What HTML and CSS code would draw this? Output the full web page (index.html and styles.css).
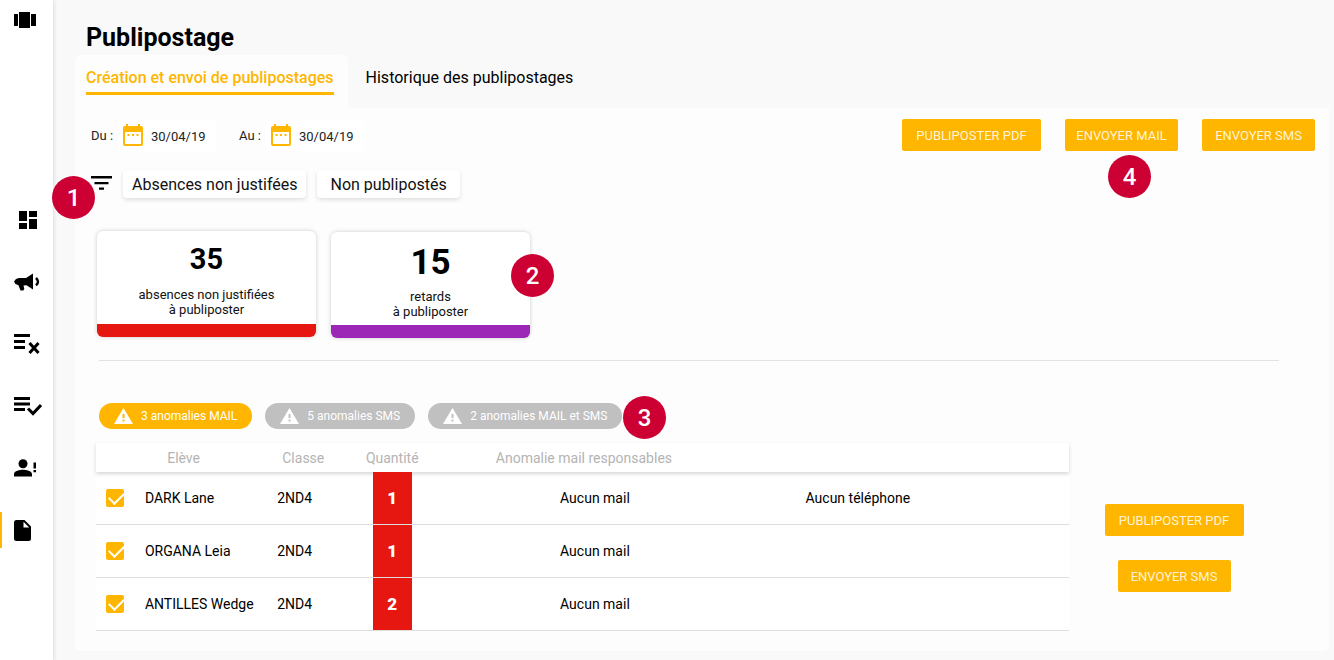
FILE: index.html
```html
<!DOCTYPE html>
<html lang="fr">
<head>
<meta charset="utf-8">
<meta name="viewport" content="width=device-width, initial-scale=1">
<title>Publipostage</title>
<link rel="stylesheet" href="styles.css">
</head>
<body>
<div class="app">
  <nav class="sidebar" aria-label="Navigation principale">
    <a class="side-link side-home" href="#" aria-label="Accueil"><svg width="22" height="18" viewBox="0 0 22 18"><path d="M0 3h4v12H0zM5 1h11v16H5zM17 3h5v12h-5z"/></svg></a>
    <a class="side-link" href="#" aria-label="Tableau de bord"><svg class="icon-dash" width="18" height="18" viewBox="0 0 18 18"><path d="M0 0h8v10H0zM10 0h8v6h-8zM0 12h8v6H0zM10 8h8v10h-8z"/></svg></a>
    <a class="side-link" href="#" aria-label="Annonces"><svg width="26" height="18" viewBox="0 0 26 18"><path d="M19 .5v16l-6.500-4.200-3 .2.800 3.500-1 1.500H6.500L4.500 12.300 1.500 11 0 8.500 2 6l3-1h7z"/><path d="M22 5q4 3.700 0 7.400" fill="none" stroke="#000" stroke-width="2.400"/></svg></a>
    <a class="side-link" href="#" aria-label="Absences"><svg width="27" height="22" viewBox="0 0 27 22"><path d="M0 1h16v3H0zM0 7h11v3H0zM0 13h11v3H0z"/><path d="M15.500 10l9 10M24.500 10l-9 10" fill="none" stroke="#000" stroke-width="3"/></svg></a>
    <a class="side-link" href="#" aria-label="Appels"><svg width="28" height="20" viewBox="0 0 28 20"><path d="M0 1h16v3H0zM0 6.500h16v3H0zM0 12h11v3H0z"/><path d="M14 12.500l5 5 8-8.500" fill="none" stroke="#000" stroke-width="3"/></svg></a>
    <a class="side-link" href="#" aria-label="Incidents"><svg width="24" height="18" viewBox="0 0 24 18"><circle cx="9" cy="4.700" r="4.500"/><path d="M0 17.500v-2.500c0-3 6-4.300 9-4.300s9 1.300 9 4.300v2.500zM19.500 3.500H22v6h-2.500zM19.500 11H22v2.200h-2.500z"/></svg></a>
    <a class="side-link side-current" href="#" aria-label="Publipostage" aria-current="page"><svg width="17" height="21" viewBox="0 0 17 21"><path fill-rule="evenodd" d="M2.500 0h8L17 6.500V18.500q0 2.500-2.500 2.500h-12Q0 21 0 18.500v-16Q0 0 2.500 0zM9.500 1.800v5.700h5.700z"/></svg></a>
  </nav>

  <main class="main">
    <h1 class="title">Publipostage</h1>
    <div class="tabs">
      <a class="tab tab-active" href="#creation" aria-current="page"><span class="tab-text">Création et envoi de publipostages</span></a>
      <a class="tab" href="#historique">Historique des publipostages</a>
    </div>

    <section class="panel" id="creation">
      <div class="toolbar">
        <div class="dates">
          <label class="date-label" for="from">Du :</label>
          <div class="date-box">
            <svg class="calendar" width="20" height="22" viewBox="0 0 20 22"><path fill-rule="evenodd" d="M3 0h2v2h10V0h2v2h1q2 0 2 2v16q0 2-2 2H2q-2 0-2-2V4q0-2 2-2h1zM2 8v12h16V8z"/><path d="M4.500 10h2v2h-2zM9 10h2v2H9zM13.500 10h2v2h-2z"/></svg>
            <input class="date-input" id="from" type="text" value="30/04/19">
          </div>
          <label class="date-label date-label-to" for="to">Au :</label>
          <div class="date-box">
            <svg class="calendar" width="20" height="22" viewBox="0 0 20 22"><path fill-rule="evenodd" d="M3 0h2v2h10V0h2v2h1q2 0 2 2v16q0 2-2 2H2q-2 0-2-2V4q0-2 2-2h1zM2 8v12h16V8z"/><path d="M4.500 10h2v2h-2zM9 10h2v2H9zM13.500 10h2v2h-2z"/></svg>
            <input class="date-input" id="to" type="text" value="30/04/19">
          </div>
        </div>
        <div class="actions">
          <button class="btn btn-wide" type="button">PUBLIPOSTER PDF</button>
          <div class="anchor">
            <button class="btn" type="button">ENVOYER MAIL</button>
            <span class="badge badge-mail">4</span>
          </div>
          <button class="btn" type="button">ENVOYER SMS</button>
        </div>
      </div>

      <div class="filters">
        <span class="badge badge-filter">1</span>
        <svg class="filter-icon" width="21" height="14" viewBox="0 0 21 14"><path d="M0 0h21v2.500H0zM3.500 6h14v2.300h-14zM8 11.500h5v2.300H8z"/></svg>
        <button class="chip" type="button">Absences non justifées</button>
        <button class="chip chip-wide" type="button">Non publipostés</button>
      </div>

      <div class="cards">
        <article class="card card-absence">
          <strong class="count">35</strong>
          <p class="card-text">absences non justifiées<br>à publiposter</p>
        </article>
        <article class="card card-late">
          <strong class="count count-large">15</strong>
          <p class="card-text">retards<br>à publiposter</p>
          <span class="badge badge-card">2</span>
        </article>
      </div>

      <hr class="rule">

      <div class="pills">
        <button class="pill pill-active" type="button"><svg width="19" height="16" viewBox="0 0 19 16"><path fill-rule="evenodd" d="M9.500 0L19 16H0zM8.500 6v4h2V6zM8.500 11.500v2h2v-2z"/></svg>3 anomalies MAIL</button>
        <button class="pill" type="button"><svg width="19" height="16" viewBox="0 0 19 16"><path fill-rule="evenodd" d="M9.500 0L19 16H0zM8.500 6v4h2V6zM8.500 11.500v2h2v-2z"/></svg>5 anomalies SMS</button>
        <div class="anchor">
          <button class="pill" type="button"><svg width="19" height="16" viewBox="0 0 19 16"><path fill-rule="evenodd" d="M9.500 0L19 16H0zM8.500 6v4h2V6zM8.500 11.500v2h2v-2z"/></svg>2 anomalies MAIL et SMS</button>
          <span class="badge badge-pill">3</span>
        </div>
      </div>

      <div class="results">
        <table class="table">
          <colgroup><col class="col-check"><col class="col-name"><col class="col-class"><col class="col-count"><col class="col-mail"><col class="col-phone"><col></colgroup>
          <thead>
            <tr><th></th><th class="th-name">Elève</th><th class="th-class">Classe</th><th>Quantité</th><th>Anomalie mail responsables</th><th></th><th></th></tr>
          </thead>
          <tbody>
            <tr><td><input class="check" id="s1" type="checkbox" checked></td><td class="name"><label for="s1">DARK Lane</label></td><td class="class">2ND4</td><td><span class="quantity">1</span></td><td class="mail">Aucun mail</td><td>Aucun téléphone</td><td></td></tr>
            <tr><td><input class="check" id="s2" type="checkbox" checked></td><td class="name"><label for="s2">ORGANA Leia</label></td><td class="class">2ND4</td><td><span class="quantity">1</span></td><td class="mail">Aucun mail</td><td></td><td></td></tr>
            <tr><td><input class="check" id="s3" type="checkbox" checked></td><td class="name"><label for="s3">ANTILLES Wedge</label></td><td class="class">2ND4</td><td><span class="quantity">2</span></td><td class="mail">Aucun mail</td><td></td><td></td></tr>
          </tbody>
        </table>
        <div class="side-actions">
          <button class="btn btn-wide" type="button">PUBLIPOSTER PDF</button>
          <button class="btn" type="button">ENVOYER SMS</button>
        </div>
      </div>
    </section>
  </main>
</div>
</body>
</html>
```

FILE: styles.css
```css
* { box-sizing: border-box; }
body {
  margin: 0;
  background: #f9f9f9;
  color: #000;
  font-family: Roboto, "Liberation Sans", sans-serif;
  font-size: 14px;
}
button, input { font-family: inherit; }
button { cursor: pointer; border: 0; }
.app { display: flex; min-height: 100vh; }

.sidebar {
  flex: 0 0 53px;
  background: #fff;
  box-shadow: 1px 0 4px rgba(0, 0, 0, .12);
}
.side-link {
  display: flex;
  align-items: center;
  height: 62px;
  padding-left: 14px;
}
.side-home { height: 40px; margin-bottom: 149px; }
.icon-dash { margin-left: 5px; }
.side-current {
  background: linear-gradient(#ffb600, #ffb600) left center / 2px 36px no-repeat;
}

.main { flex: 1; min-width: 0; padding: 20px 5px 10px 22px; }
.title {
  margin: 0;
  padding-left: 11px;
  font-size: 25px;
  line-height: 35px;
  font-weight: 700;
}
.tabs { display: flex; }
.tab {
  height: 53px;
  padding: 12px 18px 0;
  color: #000;
  font-size: 16px;
  line-height: 21px;
  text-decoration: none;
}
.tab-active {
  padding: 12px 14px 0 11px;
  background: #fdfdfd;
  border-radius: 6px 6px 0 0;
  color: #ffb600;
  font-weight: 500;
}
.tab-text {
  display: block;
  padding-bottom: 4px;
  border-bottom: 3px solid #ffb600;
}

.panel {
  background: #fdfdfd;
  border-radius: 0 0 6px 6px;
  padding: 11px 14px 20px 16px;
}
.toolbar { display: flex; justify-content: space-between; align-items: center; }
.dates { display: flex; align-items: center; }
.date-label { width: 27px; font-size: 13px; color: #222; }
.date-label-to { margin-left: 23px; }
.date-box {
  display: flex;
  align-items: center;
  gap: 8px;
  width: 98px;
  height: 32px;
  padding-left: 5px;
  background: #fff;
}
.calendar { flex: none; fill: #ffb600; }
.date-input {
  width: 60px;
  padding: 2px 0 0;
  border: 0;
  background: none;
  font-size: 13px;
  color: #222;
}
.actions { display: flex; gap: 24px; }
.btn {
  min-width: 113px;
  height: 32px;
  padding: 0 11px;
  border-radius: 2px;
  background: #ffb600;
  color: #fff3d6;
  font-size: 13px;
  white-space: nowrap;
}
.btn-wide { min-width: 139px; }

.anchor { position: relative; display: flex; }
.badge {
  position: absolute;
  display: grid;
  place-items: center;
  width: 43px;
  height: 43px;
  border-radius: 50%;
  background: #cc0033;
  color: #fff;
  font-size: 24px;
  font-weight: 500;
}
.badge-mail { top: 36px; left: 43px; }
.badge-filter { top: 6px; left: -39px; }
.badge-card { top: 22px; right: -24px; }
.badge-pill { top: -7px; left: 195px; }

.filters { position: relative; display: flex; margin-top: 19px; }
.filter-icon { margin: 6px 11px 0 0; }
.chip {
  height: 28px;
  margin-right: 11px;
  padding: 0 9px;
  border-radius: 4px;
  background: #fff;
  box-shadow: 0 2px 4px rgba(0, 0, 0, .12);
  color: #111;
  font-size: 16px;
}
.chip-wide { padding: 0 13px; }

.cards { display: flex; align-items: flex-start; gap: 15px; margin: 33px 0 0 6px; }
.card {
  position: relative;
  width: 219px;
  height: 106px;
  border-radius: 6px;
  border-bottom: 13px solid #e61610;
  background: #fff;
  box-shadow: 0 0 4px rgba(0, 0, 0, .2);
  text-align: center;
}
.card-late { width: 199px; margin-top: 1px; border-color: #9c27b6; }
.count { display: block; padding-top: 10px; font-size: 29px; line-height: 36px; }
.count-large { padding-top: 13px; font-size: 35px; }
.card-text { margin: 10px 0 0; font-size: 13px; line-height: 15px; color: #111; }
.count-large + .card-text { margin-top: 8px; }

.rule {
  height: 1px;
  margin: 22px 36px 0 8px;
  border: 0;
  background: #e2e2e2;
}

.pills { display: flex; gap: 13px; margin: 42px 0 0 8px; }
.pill {
  display: flex;
  align-items: center;
  gap: 8px;
  height: 26px;
  padding: 0 15px;
  border-radius: 13px;
  background: #c0c0c0;
  color: #fff;
  font-size: 12px;
  white-space: nowrap;
}
.pill svg { fill: #fff; }
.pill-active { background: #ffb600; }

.results { display: flex; margin: 14px 36px 0 5px; }
.table {
  flex: 1;
  min-width: 0;
  table-layout: fixed;
  border-spacing: 0;
  background: #fff;
}
.col-check { width: 4%; }
.col-name { width: 13.5%; }
.col-class { width: 8.9%; }
.col-count { width: 8.1%; }
.col-mail { width: 31.3%; }
.col-phone { width: 25%; }
.table thead { box-shadow: 0 2px 4px rgba(0, 0, 0, .16); }
.table th {
  height: 29px;
  padding: 0;
  color: #b4b4b4;
  font-weight: 400;
}
.table td { padding: 0; border-bottom: 1px solid #dedede; text-align: center; }
.table .th-name { padding-right: 34px; }
.table .th-class { padding-left: 16px; text-align: left; }
.table .name { padding-left: 10px; text-align: left; white-space: nowrap; }
.table .class { padding-left: 11px; text-align: left; }
.table .mail { padding-left: 22px; }
.check {
  appearance: none;
  display: block;
  width: 18px;
  height: 18px;
  margin: 0 auto;
  border-radius: 2px;
  background: #ffb600;
}
.check:checked::before {
  content: "";
  display: block;
  width: 13px;
  height: 7px;
  margin: 4px 0 0 3px;
  border: solid #fff;
  border-width: 0 0 2px 2px;
  transform: translateY(-1px) rotate(-45deg);
}
.quantity {
  display: grid;
  place-items: center;
  width: 39px;
  height: 52px;
  margin: 0 auto;
  background: #e61610;
  color: #fff;
  font-size: 17px;
  font-weight: 900;
}
.side-actions {
  flex: 0 0 210px;
  display: flex;
  flex-direction: column;
  align-items: center;
  gap: 24px;
  padding-top: 61px;
}
```
